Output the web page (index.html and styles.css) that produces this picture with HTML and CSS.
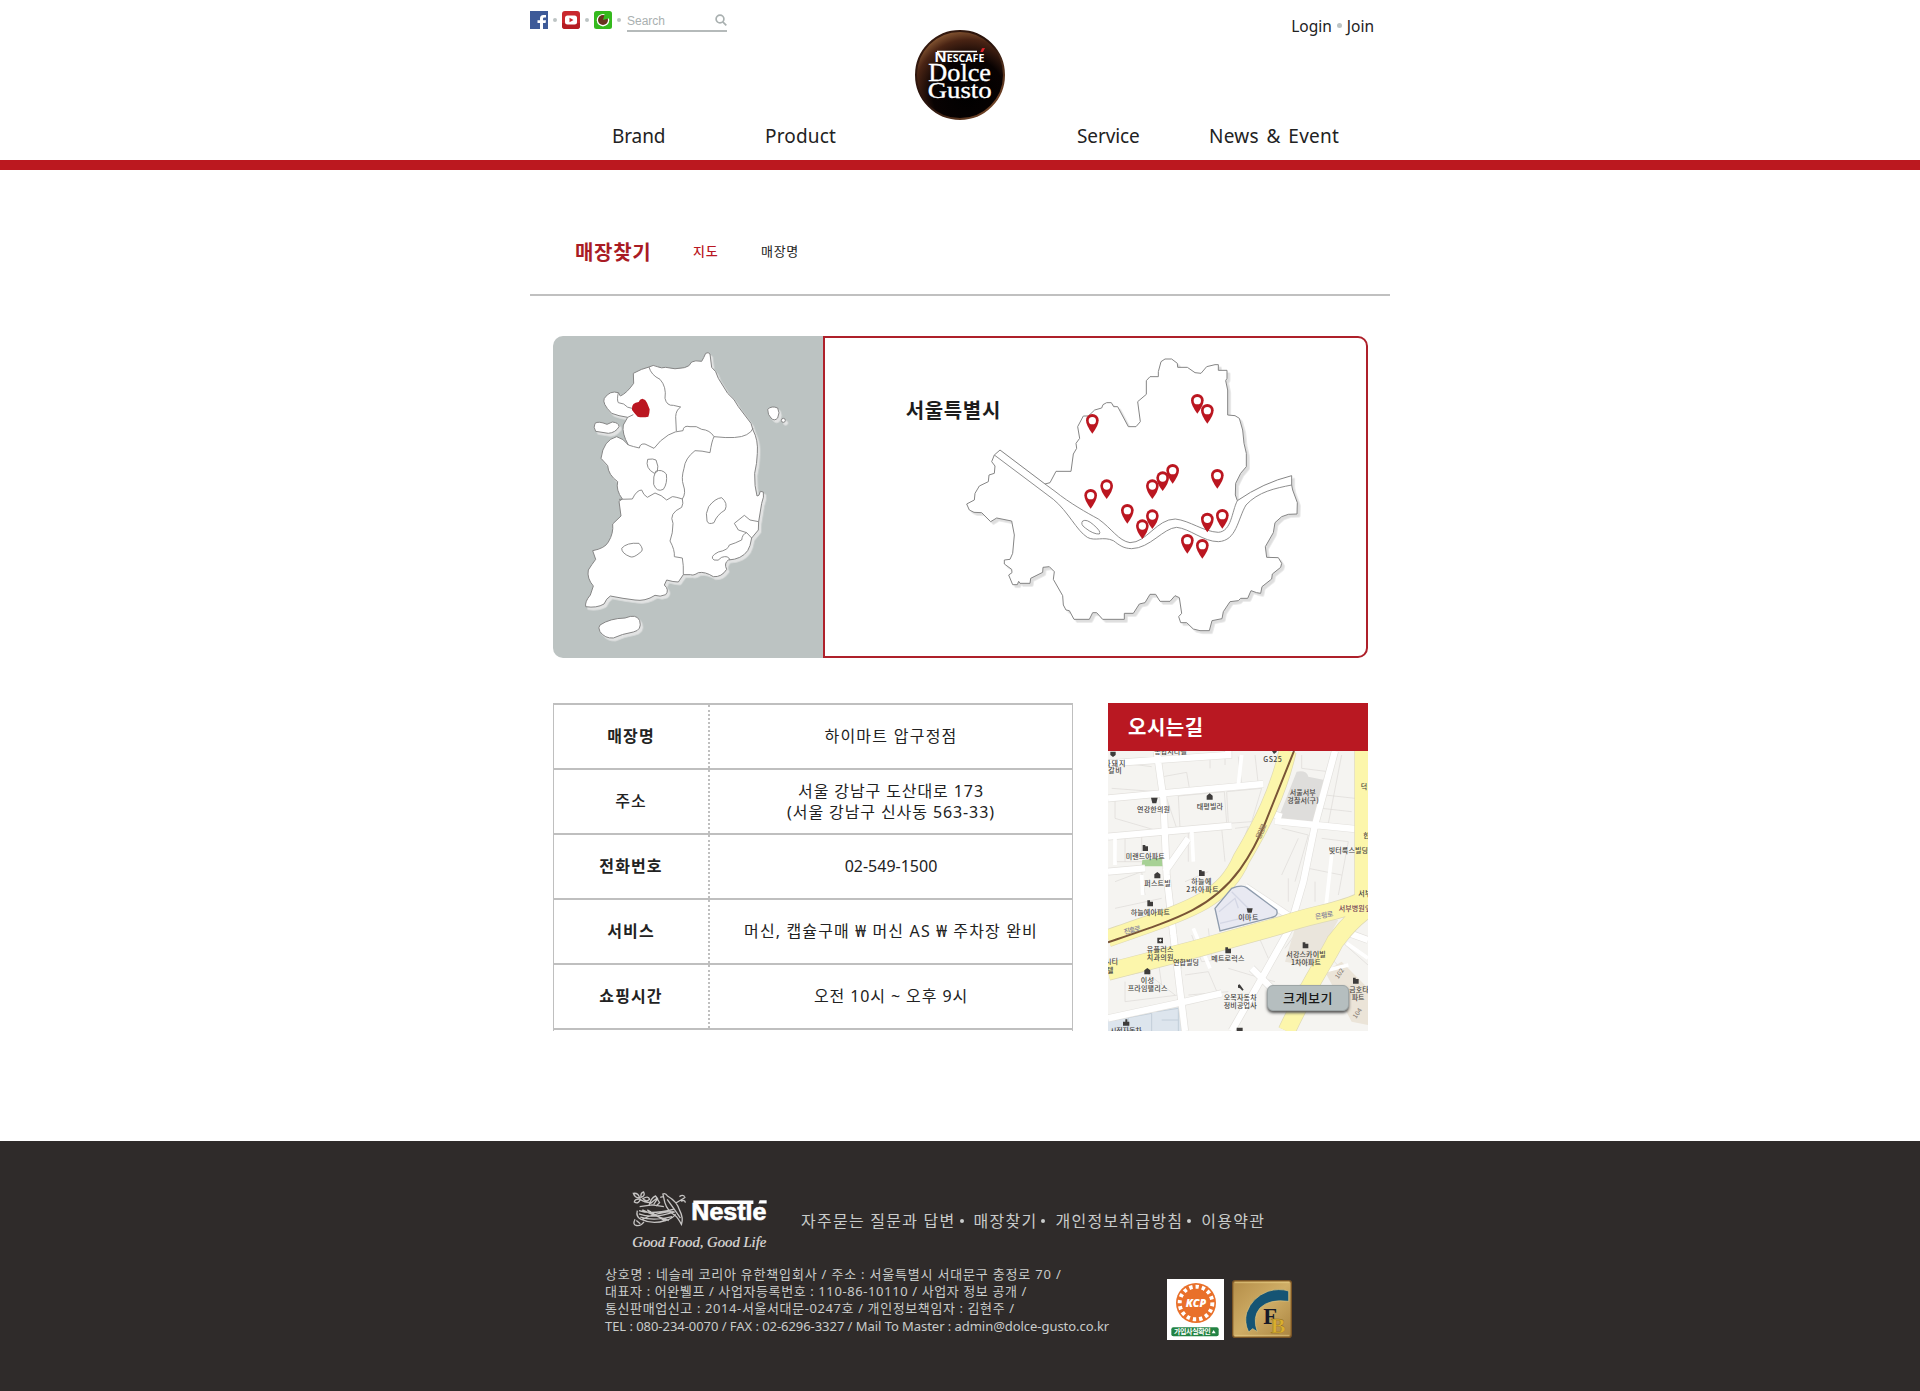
FILE: index.html
```html
<!DOCTYPE html>
<html lang="ko">
<head>
<meta charset="utf-8">
<title>Dolce Gusto - 매장찾기</title>
<link rel="stylesheet" href="styles.css">
</head>
<body>
<header class="header">
  <div class="wrap">
    <div class="top">
      <div class="social">
        <svg class="sns" viewBox="0 0 18 18"><rect width="18" height="18" fill="#3d5a98"/><path d="M10 18v-6H7.500V9.300H10V7.500Q10 4 13.300 4H16v2.600h-1.800q-1.200 0-1.200 1.200v1.500h3L15.600 12H13v6z" fill="#fff"/></svg>
        <i class="dot"></i>
        <svg class="sns" viewBox="0 0 18 18"><rect width="18" height="18" rx="3" fill="#c9282d"/><path d="M0 12h18v3q0 3-3 3H3q-3 0-3-3z" fill="#b51c22"/><rect x="3" y="4.500" width="12" height="9" rx="2.500" fill="#fff"/><path d="M7.500 6.700v4.500L11.500 9z" fill="#c9282d"/></svg>
        <i class="dot"></i>
        <svg class="sns" viewBox="0 0 18 18"><rect width="18" height="18" rx="2.500" fill="#35b91e"/><circle cx="9" cy="9.200" r="6.200" fill="#fff"/><circle cx="9" cy="9" r="5" fill="#67321f"/><path d="M9 9l2-7 5 1 .5 4z" fill="#35b91e"/></svg>
        <i class="dot"></i>
        <div class="search"><span>Search</span><svg viewBox="0 0 12 12"><circle cx="5" cy="5" r="3.900"/><path d="M7.800 7.800l3.500 3.500"/></svg></div>
      </div>
      <svg class="logo" viewBox="0 0 270 270">
        <defs>
          <radialGradient id="bean" cx=".6" cy=".72" r=".82"><stop offset="0" stop-color="#000"/><stop offset=".5" stop-color="#080202"/><stop offset=".76" stop-color="#4a2414"/><stop offset="1" stop-color="#b07a48"/></radialGradient>
          <linearGradient id="rim" x1="0" y1="0" x2="1" y2="1"><stop offset="0" stop-color="#3a1c10"/><stop offset=".5" stop-color="#27120b"/><stop offset="1" stop-color="#8a5632"/></linearGradient>
        </defs>
        <circle cx="135" cy="135" r="132" fill="url(#bean)" stroke="url(#rim)" stroke-width="6"/>
        <g fill="#fff">
          <text class="logo-cap" x="58" y="95" font-size="29" textLength="150" lengthAdjust="spacingAndGlyphs"><tspan font-size="42">N</tspan>ESCAFE</text>
          <path d="M66 62h120v5H66z"/>
          <text class="logo-name" x="40" y="152" font-size="74" textLength="188" lengthAdjust="spacingAndGlyphs">Dolce</text>
          <text class="logo-name" x="38" y="204" font-size="70" textLength="192" lengthAdjust="spacingAndGlyphs">Gusto</text>
        </g>
        <path d="M201 55l9-1-6 12h-8z" fill="#e3232b"/>
      </svg>
      <div class="member"><a>Login</a><i class="dot"></i><a>Join</a></div>
    </div>
    <nav class="nav"><a>Brand</a><a class="product">Product</a><a>Service</a><a class="news">News &amp; Event</a></nav>
  </div>
</header>

<main class="wrap">
  <div class="title-bar"><h1>매장찾기</h1><a class="on">지도</a><a>매장명</a></div>

  <section class="region">
    <svg class="korea" viewBox="24 18 810 966">
      <g class="land korea-land">
        <path d="M265 130Q290 116 312 111Q325 102 337 110Q350 116 362 112Q390 120 418 113Q434 110 440 96Q450 90 470 94Q476 84 482 70Q490 65 495 72L500 112L512 125L520 145L548 190Q570 208 580 230L618 280L624 300Q640 330 637 370Q636 400 629 430Q628 470 636 498Q643 500 646 484L655 486Q658 500 650 520L641 575L640 600L620 624Q616 650 608 662Q590 688 550 690Q536 700 545 718Q530 742 505 740Q480 724 460 728Q445 738 437 734L415 734L400 756Q385 756 365 750L358 765Q374 780 362 794Q345 802 330 796Q300 815 270 810Q235 806 196 798Q184 805 177 822Q155 835 122 830Q119 815 136 795L145 768Q125 745 130 720Q140 704 152 688L143 662Q180 655 190 636Q206 610 203 582L228 558L222 514L232 507Q212 480 218 455Q190 435 188 407L168 385Q175 330 215 320Q235 325 250 345Q230 310 235 285L248 262Q220 258 200 250Q170 220 178 205Q195 180 220 188L226 198Q245 190 266 160Z"/>
        <path d="M150 280Q160 272 186 283L202 276Q222 278 222 290Q212 308 190 310Q165 306 152 304Q144 292 150 280Z"/>
        <path d="M165 885Q195 865 240 864Q275 850 284 872Q292 900 265 906Q230 912 205 924Q180 926 165 905Q158 892 165 885Z"/>
        <path d="M668 238Q680 226 698 234Q706 248 698 264Q688 275 678 264Q668 255 668 238Z"/><circle cx="715" cy="271" r="6"/>
      </g>
      <g class="border">
        <path d="M312 111Q318 135 345 148Q365 170 360 205Q365 228 385 226L407 231Q393 240 392 260L394 303M220 188Q215 210 220 218L236 222Q245 234 265 236M248 262L265 254M250 345Q265 350 283 354Q285 340 300 342L327 355Q345 330 370 315Q390 303 414 302Q415 285 435 290Q455 286 470 298Q495 300 507 320Q500 334 495 368Q470 362 450 362Q420 385 417 415Q408 445 415 465Q424 490 412 507Q390 500 382 500L365 510Q350 495 330 489L307 502Q295 495 290 480Q275 480 262 507L222 508M507 320Q580 328 605 314Q620 306 624 295M412 507Q416 520 410 532Q370 550 384 580Q384 610 375 633Q390 660 388 680L412 684Q416 705 415 734"/>
        <path d="M308 388Q325 385 333 390Q342 410 337 424L328 430Q300 415 308 388ZM332 424Q350 416 364 432Q368 460 355 478Q335 488 326 463Q324 438 332 424ZM491 530Q510 505 530 503Q550 520 540 540Q515 555 507 578Q490 585 486 573Q480 550 491 530ZM230 655Q245 637 282 640Q300 660 285 668Q265 685 255 680Q230 670 230 655ZM641 575L615 570L598 556L568 580L580 600L605 608L620 624M605 608Q592 612 590 630Q570 640 553 645Q550 660 520 666Q492 680 507 690Q520 695 530 682Q550 675 555 690"/>
      </g>
      <path d="M261 235Q260 219 281 216Q284 207 292 206Q302 208 306 218L314 238Q314 250 310 260Q292 264 278 260Q268 250 261 240Z" fill="#bb1620"/>
    </svg>
    <div class="city">
      <svg viewBox="15 24 1623 954">
        <defs><g id="pin"><path d="M0 37Q-19 12-19-3A19 19 0 0 1 19-3Q19 12 0 37Z" fill="#bb1620"/><circle cy="-2" r="11" fill="#fff"/></g></defs>
        <g class="land city-land">
          <path d="M675 462L690 458L708 424L753 424L760 372L770 355L768 340L779 325L773 290L790 258L805 258L824 240L845 234L849 224L860 218H874L881 230H893L925 290H948L961 275L953 215L979 193V152L990 140H1015V125L1023 95L1035 87H1055L1072 100L1073 112H1102L1125 128L1143 130L1160 110L1185 104H1195V121H1221V145L1217 152L1223 180V255L1245 257L1258 265L1268 300L1272 340L1279 370V410L1262 430L1247 460L1246 495L1252 512Q1330 458 1415 437V465L1418 480L1432 518L1431 552L1405 553L1385 560L1365 578L1360 608L1336 650L1340 682L1375 683L1385 700L1382 712L1357 732L1355 747L1326 770L1322 790L1310 788L1293 782L1283 805H1262L1255 812L1230 815L1210 845L1206 866L1176 872L1168 902H1140L1120 897L1100 878H1082L1076 860L1085 850L1078 803L1065 797L1050 814H1020L1007 793H990L975 818L958 822L940 850H913V868H848L830 848H818L808 868H762L748 842L738 840L730 825L728 797L700 748L703 725L688 710L669 712L668 727L632 745L630 760H600L596 754L592 764H578L566 735L576 728L575 718L553 702V690L570 688L578 670L583 615L575 573L530 564L512 575L485 548L462 547L448 540L440 522L463 510L465 490L478 468L505 455L507 435L523 430L525 408L515 395L523 375L540 360Z"/>
        </g>
        <path class="border" d="M675 462L705 484C750 520 800 548 835 567C875 595 895 632 930 638C980 638 1010 567 1066 567C1110 572 1150 605 1195 607C1235 604 1235 545 1252 512M523 375L700 508C745 545 770 602 802 622C825 635 850 618 880 632C900 647 910 655 935 656C990 655 1030 594 1070 592C1110 596 1150 635 1195 635C1250 632 1252 570 1278 525C1315 485 1365 475 1415 465M788 573Q800 566 820 584Q845 605 838 612Q820 613 796 594Q780 583 788 573Z"/>
        <g transform="translate(0 4)"><use href="#pin" x="1132" y="210"/><use href="#pin" x="1162" y="240"/><use href="#pin" x="1192" y="435"/><use href="#pin" x="1058" y="420"/><use href="#pin" x="1028" y="442"/><use href="#pin" x="997" y="466"/><use href="#pin" x="860" y="466"/><use href="#pin" x="922" y="540"/><use href="#pin" x="997" y="556"/><use href="#pin" x="967" y="586"/><use href="#pin" x="1162" y="566"/><use href="#pin" x="1207" y="555"/><use href="#pin" x="1102" y="630"/><use href="#pin" x="1147" y="645"/><use href="#pin" x="817" y="270"/><use href="#pin" x="812" y="495"/></g>
        <text class="city-name" x="257" y="264" font-size="60" textLength="284">서울특별시</text>
      </svg>
    </div>
  </section>

  <section class="detail">
    <dl class="store">
      <div><dt>매장명</dt><dd class="name">하이마트 압구정점</dd></div>
      <div><dt class="light">주소</dt><dd>서울 강남구 도산대로 173<br>(서울 강남구 신사동 563-33)</dd></div>
      <div><dt>전화번호</dt><dd class="tel">02-549-1500</dd></div>
      <div><dt>서비스</dt><dd class="service">머신, 캡슐구매 ₩ 머신 AS ₩ 주차장 완비</dd></div>
      <div><dt>쇼핑시간</dt><dd>오전 10시 ~ 오후 9시</dd></div>
    </dl>
    <div class="way">
      <h2>오시는길</h2>
      <div class="map">
        <svg viewBox="39 168 780 840">
          <rect x="39" y="168" width="780" height="840" fill="#f5f4f1"/>
          <g fill="none" stroke="#dcdad6" stroke-width="2">
            <path d="M204 245L275 232L284 285L206 293ZM250 303L388 290L395 385L255 400ZM60 315V370L180 405M215 310L245 400M215 415L280 408V500M300 410L380 400L390 500M430 185L440 270L300 282M60 425L65 500H200M90 430V500M140 420V470M395 290L500 280L470 380L400 385ZM420 400L460 395L440 450M560 400L640 420L600 560M610 430L560 540M690 300L780 310M680 340L770 350M740 180L700 385M620 180V220L700 230M480 180L490 270M345 180V220M390 180V210M50 200L170 215M50 280L185 290M680 430L760 440L730 600M640 520L740 540M660 560V620M580 550V620M60 560L140 530L150 600M270 560L340 530M210 560L215 640M60 640L200 610M50 850L150 830L240 900M90 860V920L250 900M190 800L200 870M240 750L260 820M290 720L320 800L410 790M340 700L350 790M440 680L470 740M400 820L500 850L440 930M480 700L520 790M270 840L340 830L370 900M280 900L400 890M500 850L540 860M560 700L620 690L570 760M700 780L810 900M740 740L819 810M660 700V760L700 790M590 880L640 860L650 900"/>
          </g>
          <path d="M550 370L605 230Q635 225 640 245L688 255L660 380Z" fill="#dedddb"/>
          <path d="M600 700L690 670L730 675L650 815L570 800Z" fill="#eae5dc"/>
          <path d="M690 830L740 800L819 880V990L770 980Z" fill="#ebe4d8"/>
          <path d="M39 960L240 930L268 945V1008H39Z" fill="#dde5ed"/>
          <path d="M60 975L170 955V1008M100 965V1008M185 950L250 940V1008M200 975H250" fill="none" stroke="#c2ced9" stroke-width="3"/>
          <path d="M142 495L200 488L204 514H140Z" fill="#a7d195"/>
          <path d="M39 310L505 267M185 168L205 310L215 540L235 720M39 425L410 392M540 378L780 402M720 168L660 390L625 560L590 680M450 575L585 665M39 970L270 920L380 895M235 720L270 1008M410 1008L500 850L590 690M510 350L560 365M280 430L210 530M39 530L150 520M470 820L530 880M819 735L750 710M400 168L400 180L39 205" fill="none" stroke="#e3e1dd" stroke-width="23"/>
          <path d="M39 310L505 267M185 168L205 310L215 540L235 720M39 425L410 392M540 378L780 402M720 168L660 390L625 560L590 680M450 575L585 665M39 970L270 920L380 895M235 720L270 1008M410 1008L500 850L590 690M510 350L560 365M280 430L210 530M39 530L150 520M470 820L530 880M819 735L750 710M400 168L400 180L39 205" fill="none" stroke="#fff" stroke-width="19"/>
          <path d="M140 540L143 600M295 700L345 820M60 430V510M290 400L295 500M430 270L440 180M710 480L690 660M755 745L819 790M680 830L760 810" fill="none" stroke="#fff" stroke-width="11"/>
          <path class="road-edge" d="M578 168C550 290 500 390 440 490C385 620 280 645 39 730M39 830C200 790 370 745 560 690C660 655 740 650 805 615L805 168M819 640C750 690 735 725 720 740C690 800 645 860 575 1008"/>
          <path class="road" d="M578 168C550 290 500 390 440 490C385 620 280 645 39 730M39 830C200 790 370 745 560 690C660 655 740 650 805 615L805 168M819 640C750 690 735 725 720 740C690 800 645 860 575 1008"/>
          <path d="M597 168L510 385Q480 460 435 523C350 640 250 670 39 742" fill="none" stroke="#795436" stroke-width="6"/>
          <path d="M360 640L410 580Q440 568 455 578L545 645Q550 662 535 666L375 708Z" fill="#e8e9f2" stroke="#8f9cad" stroke-width="4"/>
          <path d="M372 650L420 610L430 640M410 590L470 650M375 685L460 665" fill="none" stroke="#d4d7e5" stroke-width="4"/>
          <g class="marks">
            <path d="M46 170h16v10l-8 6-8-6zM168 308h20l-4 17h-12zM335 302l9-7 9 7v12h-18zM143 450h8v4h8v14h-16zM529 165h16v6l-8 6zM178 538l9-7 9 7v12h-18zM312 525h8v4h9v14h-17zM157 616h8v4h9v14h-17zM455 640h18l-3 13h-12zM187 728h17v17h-17zM391 757h8v4h9v14h-17zM623 742h8v4h9v14h-17zM148 826l9-7 9 7v12h-18zM774 848h8v4h9v14h-17zM429 870l5-2 12 16-4 3-7-7-6-2zM84 980h7v-7h6v7h6v12H84zM425 998h18v10h-18z"/>
            <path d="M192 736h8M196 732v8" stroke="#fff" stroke-width="3"/>
          </g>
          <g class="places">
            <text x="28" y="213" textLength="63">파돼지</text><text x="40" y="235" textLength="40">갈비</text><text x="178" y="177" textLength="97">종합시티팰</text><text x="505" y="201" textLength="55">GS25</text>
            <text x="584" y="300" textLength="78">서울서부</text><text x="577" y="325" textLength="94">경찰서(구)</text><text x="797" y="281">덕</text><text x="805" y="430">한</text><text x="701" y="475" textLength="118">빛터룩스빌딩</text>
            <text x="126" y="352" textLength="99">연강한의원</text><text x="305" y="342" textLength="79">태평빌라</text><text x="92" y="492" textLength="117">미랜드아파트</text>
            <text x="148" y="574" textLength="79">퍼스트빌</text><text x="289" y="567" textLength="60">하늘에</text><text x="274" y="592" textLength="97">2차아파트</text><text x="107" y="659" textLength="118">하늘에아파트</text><text x="430" y="676" textLength="60">이마트</text>
            <text x="790" y="604">서부</text><text x="731" y="647" textLength="98" fill="#713b54">서부병원앞</text>
            <text x="155" y="772" textLength="80">유플러스</text><text x="155" y="795" textLength="80">치과의원</text><text x="234" y="810" textLength="78">연합빌딩</text><text x="349" y="799" textLength="99">메트로럭스</text><text x="574" y="785" textLength="118">서강스카이빌</text><text x="588" y="810" textLength="90">1차아파트</text>
            <text x="137" y="863" textLength="40">이성</text><text x="98" y="889" textLength="119">프라임팰리스</text><text x="386" y="914" textLength="99">오복자동차</text><text x="386" y="938" textLength="99">정비공업사</text>
            <text x="30" y="808" textLength="39">시티</text><text x="36" y="835">텔</text><text x="763" y="890" textLength="58">금호타</text><text x="770" y="914">파트</text><text x="45" y="1015" textLength="95">시전자동차</text>
            <text x="660" y="668" textLength="55" fill="#837f9c" transform="rotate(-10 688 660)">은평로</text><text x="86" y="713" textLength="52" fill="#837f9c" transform="rotate(-14 110 705)">진흥로</text>
            <text x="478" y="417" fill="#93795e" textLength="48" transform="rotate(-65 500 412)">응암로</text>
            <text x="716" y="841" fill="#8b8379" font-size="19" transform="rotate(-55 734 834)">102</text><text x="770" y="962" fill="#8b8379" font-size="19" transform="rotate(-55 786 954)">104</text>
          </g>
        </svg>
        <button class="zoom-btn">크게보기</button>
      </div>
    </div>
  </section>
</main>

<footer class="footer">
  <div class="foot">
    <div class="foot-top">
      <svg class="nestle" viewBox="0 0 408 190">
        <g fill="none" stroke="#c6c4c3" stroke-width="4">
          <path d="M15 62Q10 80 25 88Q60 105 100 92Q125 85 130 72M20 62Q55 75 125 58M20 72Q60 88 128 66M24 82Q65 95 120 80M30 60Q70 80 110 92M30 88Q80 65 125 65M45 60L100 94M8 88Q0 105 12 107Q25 110 35 96M12 92l12 10M22 50L60 45L95 50"/>
          <path d="M92 12Q100 8 106 18Q135 35 142 60Q155 85 148 104Q138 85 130 78Q105 62 98 38ZM105 28Q125 55 145 85M92 20L84 22M130 40L160 22M142 20Q152 12 158 20M146 34Q158 28 160 38M50 48Q55 25 70 18L76 26L64 44M70 18L82 38L72 48M52 42L75 24"/>
          <path d="M3 10Q18 8 22 24Q8 25 3 10ZM26 22Q24 8 34 6Q40 18 26 22ZM24 28Q8 26 6 36Q18 44 24 28ZM32 26Q48 16 52 28Q42 38 32 26ZM22 28Q40 40 60 38"/>
        </g>
        <text class="nestle-name" x="178" y="89" font-size="71" textLength="226" lengthAdjust="spacingAndGlyphs">Nestle</text>
        <path d="M184 32H365V42H184ZM384 31H405V41H380Z" fill="#fff"/>
        <text class="nestle-tag" x="0" y="171" font-size="44" textLength="404" lengthAdjust="spacingAndGlyphs">Good Food, Good Life</text>
      </svg>
      <ul class="links"><li>자주묻는 질문과 답변</li><li>매장찾기</li><li>개인정보취급방침</li><li>이용약관</li></ul>
    </div>
    <div class="foot-bottom">
      <address>
        <p class="l1">상호명 : 네슬레 코리아 유한책입회사 / 주소 : 서울특별시 서대문구 충정로 70 /</p>
        <p class="l2">대표자 : 어완뷀프 / 사업자등록번호 : 110-86-10110 / 사업자 정보 공개 /</p>
        <p class="l3">통신판매업신고 : 2014-서울서대문-0247호 / 개인정보책임자 : 김현주 /</p>
        <p class="l4">TEL : 080-234-0070 / FAX : 02-6296-3327 / Mail To Master : admin@dolce-gusto.co.kr</p>
      </address>
      <svg class="kcp" viewBox="0 0 171 183">
        <rect width="171" height="183" fill="#fff"/>
        <circle cx="87" cy="72" r="60" fill="#e9702a"/><circle cx="87" cy="72" r="49" fill="none" stroke="#fff" stroke-width="12" stroke-dasharray="10 9"/><circle cx="87" cy="72" r="42" fill="#e9702a"/>
        <text x="56" y="83" font-size="30" textLength="62" lengthAdjust="spacingAndGlyphs" class="kcp-name">KCP</text>
        <rect x="13" y="145" width="142" height="27" rx="6" fill="#238344"/>
        <text x="21" y="166" font-size="21" textLength="110" fill="#fff" class="kcp-tag">가입사실확인</text><path d="M134 163l6-10 6 10z" fill="#fff"/>
      </svg>
      <svg class="fb" viewBox="0 0 180 174">
        <defs><linearGradient id="gold" x1="0" y1="0" x2="1" y2="1"><stop offset="0" stop-color="#b48d48"/><stop offset=".5" stop-color="#cfad66"/><stop offset="1" stop-color="#aa8440"/></linearGradient></defs>
        <rect x="2" y="2" width="176" height="170" rx="8" fill="url(#gold)" stroke="#795426" stroke-width="4"/><path d="M8 8H172M8 166H172" stroke="#ead08a" stroke-width="2"/>
        <path d="M170 33Q140 24 108 34Q60 52 44 98Q36 128 50 156L62 146L76 155Q60 112 84 84Q112 56 170 64Z" fill="#155474" stroke="#e0c681" stroke-width="2"/>
        <text class="fb-letter" x="94" y="132" font-size="68" fill="#171a28">F</text><text class="fb-letter" x="116" y="160" font-size="66" fill="#d9ae2e" stroke="#8b671c">B</text>
      </svg>
    </div>
  </div>
</footer>
</body>
</html>
```
FILE: styles.css
```css
* { box-sizing: border-box; margin: 0; padding: 0; }
body { background: #fff; color: #222; font-family: "Noto Sans", "Noto Sans CJK KR", sans-serif; font-size: 16px; }
svg { display: block; }
svg text { font-family: "Noto Sans CJK KR", "Noto Sans", sans-serif; }
.wrap { width: 860px; margin: 0 auto; }

.header { height: 170px; border-bottom: 10px solid #bb181f; }
.top { display: grid; grid-template-columns: 385px 90px 1fr; height: 120px; }
.social { display: flex; align-items: flex-start; padding-top: 11px; }
.sns { width: 18px; height: 18px; }
.dot { width: 4px; height: 4px; border-radius: 50%; background: #bdc4c4; margin: 7px 5px 0; }
.search { display: flex; justify-content: space-between; width: 100px; height: 21px; margin-left: 1px; border-bottom: 2px solid #b5baba; font: 12px/20px "Liberation Sans", sans-serif; color: #a9b0b0; }
.search svg { width: 12px; height: 12px; margin-top: 3px; fill: none; stroke: #a9b0b0; stroke-width: 1.700; }
.logo { width: 90px; height: 90px; margin-top: 30px; }
.logo-cap { font-family: "Open Sans", sans-serif; font-weight: 700; }
.logo .logo-name { font-family: "Liberation Serif", serif; stroke: #fff; stroke-width: 1; }
.member { display: flex; justify-content: flex-end; padding: 15px 16px 0 0; line-height: 22px; font-size: 15.500px; }
.member .dot { margin-top: 8px; width: 5px; height: 5px; }
.nav { display: grid; grid-template-columns: 153px 312px 132px auto; padding: 2px 0 0 82px; font-size: 19px; line-height: 28px; letter-spacing: -.1px; }
.nav .product { letter-spacing: .15px; }
.nav .news { letter-spacing: .25px; word-spacing: 2.500px; white-space: nowrap; }

.title-bar { display: flex; align-items: flex-start; height: 126px; padding: 71px 0 0 45px; margin-bottom: 40px; border-bottom: 2px solid #c0c0c0; font-size: 13px; line-height: 20px; }
h1 { width: 118px; font-size: 20px; line-height: 23px; letter-spacing: .7px; color: #a91b24; }
.title-bar a { width: 68px; letter-spacing: .7px; }
.title-bar .on { color: #b91824; font-weight: 500; }

.region { display: flex; width: 815px; height: 322px; margin-left: 23px; }
.korea { width: 270px; height: 322px; background: #bcc3c2; border-radius: 10px 0 0 10px; }
.city { width: 545px; border: 2px solid #ae202a; border-radius: 0 10px 10px 0; }
.city svg { width: 541px; height: 318px; }
.land { fill: #fff; stroke: #858585; stroke-width: 3; stroke-linejoin: round; }
.korea-land { filter: drop-shadow(7px 8px 1px #e2e3e3); }
.city-land { filter: drop-shadow(8px 8px 2px #dedede); }
.border { fill: none; stroke: #858585; stroke-width: 2.800; stroke-linejoin: round; }
.city-name { font-weight: 700; fill: #1d1d1d; }

.detail { display: flex; justify-content: space-between; width: 815px; margin: 45px 0 0 23px; }
.store { width: 520px; border: solid #bfbfbf; border-width: 2px 1px 0; }
.store div { display: flex; height: 65px; border-bottom: 2px solid #bfbfbf; }
.store dt, .store dd { display: flex; align-items: center; justify-content: center; text-align: center; line-height: 21px; }
.store dt { width: 156px; border-right: 2px dotted #bfbfbf; font-weight: 600; letter-spacing: 1.100px; }
.store .light { font-weight: 500; }
.store dd { flex: 1; letter-spacing: .9px; }
.store .name { letter-spacing: 1.250px; }
.store .tel { letter-spacing: 0; }
.store .service { letter-spacing: 1.150px; }
.way { width: 260px; }
h2 { height: 48px; padding-left: 20px; background: #b91822; color: #fff; font-size: 20px; line-height: 49px; letter-spacing: .5px; }
.map { position: relative; }
.map svg { width: 260px; height: 280px; }
.road { fill: none; stroke: #fcf6ab; stroke-width: 50; }
.road-edge { fill: none; stroke: #ded9b4; stroke-width: 54; }
.marks { fill: #3e3c3b; }
.places { font-size: 21px; font-weight: 500; fill: #464442; }
.zoom-btn { position: absolute; left: 159px; top: 234px; width: 82px; height: 26px; border: 1px solid #9da5a6; border-radius: 6px; background: #b5bebf; box-shadow: 0 2px 3px #555; color: #171717; font: 500 13px/22px "Noto Sans CJK KR", sans-serif; letter-spacing: .5px; }

.footer { height: 250px; margin-top: 110px; background: #2f2b2a; color: #c9cccb; }
.foot { width: 710px; margin: 0 auto; padding-top: 49px; }
.foot-top { display: flex; padding-left: 27px; }
.nestle { width: 136px; height: 63px; }
.nestle .nestle-name { font-family: "Liberation Sans", sans-serif; font-weight: 700; fill: #fff; stroke: #fff; stroke-width: 2; }
.nestle .nestle-tag { font-family: "Liberation Serif", serif; font-style: italic; fill: #dedcda; stroke: #dedcda; stroke-width: .7; }
.links { display: flex; list-style: none; margin: 20px 0 0 33px; line-height: 22px; white-space: nowrap; letter-spacing: 1.250px; }
.links li { display: flex; }
.links li:not(:last-child)::after { content: ""; width: 4px; height: 4px; margin: 9px 10px 0 4px; border-radius: 50%; background: #c9cccb; }
.foot-bottom { display: flex; align-items: flex-start; margin-top: 13px; }
address { width: 562px; font-style: normal; font-size: 13px; line-height: 17.200px; white-space: nowrap; }
.l1 { letter-spacing: .8px; }
.l2 { letter-spacing: .6px; }
.l3 { letter-spacing: .6px; }
.l4 { letter-spacing: -.05px; }
.kcp { width: 57px; height: 61px; margin-top: 13px; }
.kcp .kcp-name { font-family: "Open Sans", sans-serif; font-weight: 800; font-style: italic; fill: #fff; }
.kcp-tag { font-weight: 700; }
.fb { width: 60px; height: 58px; margin: 14px 0 0 8px; }
.fb .fb-letter { font-family: "Liberation Serif", serif; font-weight: 700; }
```
